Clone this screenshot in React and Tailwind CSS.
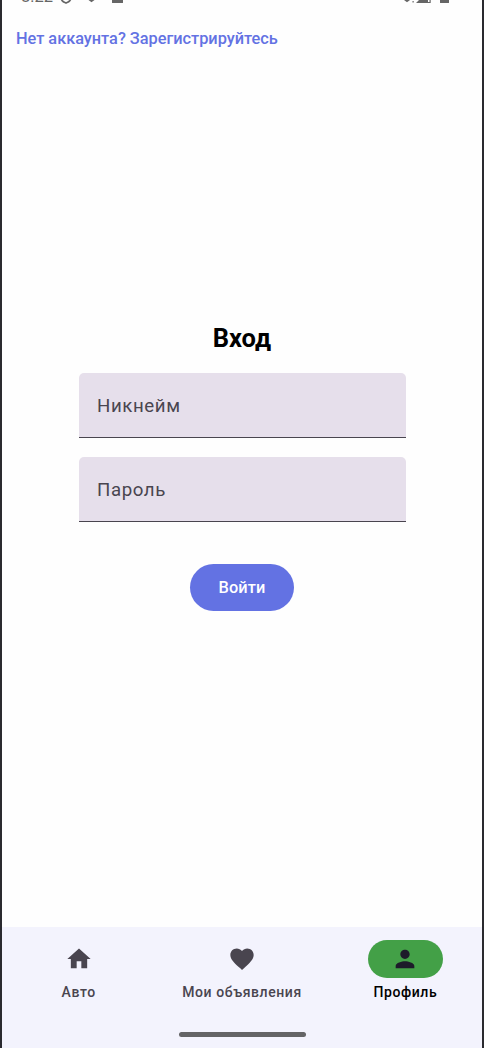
import React from "react";

const ICONS = {
  home: "M10 20v-6h4v6h5v-8h3L12 3 2 12h3v8z",
  heart:
    "M12 21.35l-1.45-1.32C5.4 15.36 2 12.28 2 8.5 2 5.42 4.42 3 7.5 3c1.74 0 3.41.81 4.5 2.09C13.09 3.81 14.76 3 16.5 3 19.58 3 22 5.42 22 8.5c0 3.78-3.4 6.86-8.55 11.54L12 21.35z",
  person:
    "M12 12c2.21 0 4-1.79 4-4s-1.79-4-4-4-4 1.79-4 4 1.79 4 4 4zm0 2c-2.67 0-8 1.34-8 4v2h16v-2c0-2.66-5.33-4-8-4z",
};

function StatusBar() {
  return (
    <div className="flex h-5 shrink-0 items-start justify-between overflow-hidden pl-[19px] pr-[33px] text-[#666666]">
      <div className="flex items-start">
        <span className="-mt-[13.5px] w-[39px] text-[16.5px] leading-5 tracking-[0.1px]">8:22</span>
        <svg className="h-1 w-16" viewBox="0 0 64 4" fill="none">
          <path d="M1.5 0Q3 2 6 3Q9 2 10.500 0" stroke="currentColor" strokeWidth="1.8" />
          <path d="M28.500 0h6L31.500 2.300z" fill="currentColor" />
          <path d="M52 0h11v2.500q0 .5-.5.5h-10q-.5 0-.5-.5z" fill="currentColor" />
        </svg>
      </div>
      <svg className="h-1 w-[46px]" viewBox="0 0 46 4">
        <path d="M1 0h6L4 2.300z" fill="currentColor" />
        <path d="M9.500 1h1.200v1.500H9.500zM13 3l3-3h9v2h1.500V0h1.200v3z" fill="currentColor" />
        <path d="M37 0h9v2.500q0 .5-.5.500h-8q-.5 0-.5-.500z" fill="currentColor" />
      </svg>
    </div>
  );
}

function Field({ label, type }) {
  return (
    <input
      type={type}
      aria-label={label}
      placeholder={label}
      className="block h-[65px] w-[327px] rounded-t-[5px] border-b border-[#49454f] bg-[#e6dfeb] px-[18.5px] pt-0.5 text-[18.67px] tracking-[0.6px] text-[#49454f] outline-none placeholder:text-[#49454f]"
    />
  );
}

function NavItem({ icon, label, active = false }) {
  return (
    <button
      className={
        "flex flex-1 basis-0 flex-col items-center " + (active ? "text-black" : "text-[#49454f]")
      }
    >
      <span
        className={
          "flex h-[38px] w-[75px] items-center justify-center rounded-full " +
          (active ? "bg-[#43a047] text-[#1d1b2a]" : "")
        }
      >
        <svg viewBox="0 0 24 24" className="size-7" fill="currentColor">
          <path d={ICONS[icon]} />
        </svg>
      </span>
      <span className="mt-1 whitespace-nowrap text-[14px] font-medium leading-5 tracking-[0.58px]">
        {label}
      </span>
    </button>
  );
}

export default function App() {
  return (
    <div className="flex h-[1048px] w-[484px] flex-col overflow-hidden border-x-2 border-[#2a2a2f] bg-[#fefefe] font-[Roboto,sans-serif]">
      <StatusBar />
      <a
        href="#"
        className="ml-3.5 mt-[9px] self-start text-[16.33px] font-medium leading-5 tracking-[-0.015px] text-[#6372e3]"
      >
        Нет аккаунта? Зарегистрируйтесь
      </a>
      <main className="flex flex-1 flex-col items-center pt-[271px]">
        <h1 className="text-[25.5px] font-bold leading-9 text-black">Вход</h1>
        <form className="mt-[17px] flex flex-col items-center">
          <Field label="Никнейм" type="text" />
          <div className="mt-[19px]">
            <Field label="Пароль" type="password" />
          </div>
          <button
            type="button"
            className="mt-[42px] h-[47px] w-[104px] rounded-full bg-[#6372e3] pt-0.5 text-[16.33px] font-medium tracking-[0.117px] text-white"
          >
            Войти
          </button>
        </form>
      </main>
      <nav className="flex h-[121px] shrink-0 flex-col items-center bg-[#f3f3fd]">
        <div className="flex h-[105px] w-full gap-2.5 pt-[13px]">
          <NavItem icon="home" label="Авто" />
          <NavItem icon="heart" label="Мои объявления" />
          <NavItem icon="person" label="Профиль" active />
        </div>
        <div className="h-[5px] w-[127px] rounded-full bg-[#646466]" />
      </nav>
    </div>
  );
}
